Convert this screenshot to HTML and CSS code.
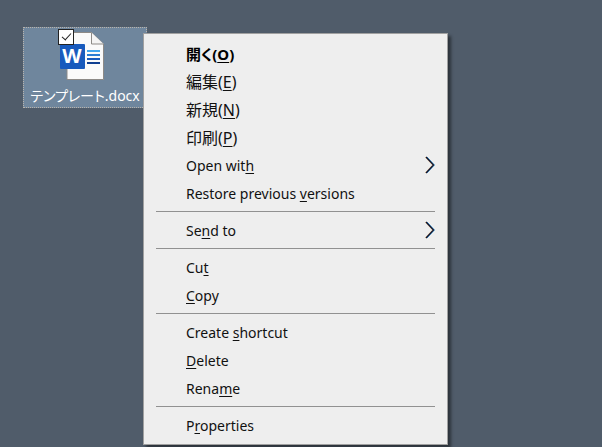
FILE: index.html
```html
<!DOCTYPE html>
<html lang="ja">

<head>
    <meta charset="UTF-8">
    <title>デスクトップ</title>
    <link rel="stylesheet" href="styles.css">
</head>

<body>
    <div class="file">
        <div class="thumb">
            <input type="checkbox" class="check" id="doc" checked>
            <svg width="46" height="50" viewBox="0 0 46 50" aria-hidden="true">
                <path d="M7 .5H31.500L43.500 12V47.500H7Z" fill="#fafafa" stroke="#8d8a87" />
                <path d="M31.500 .5V12H43.500" fill="#f4f4f4" stroke="#8d8a87" />
                <rect x="27" y="18" width="13" height="2" fill="#41a5ee" />
                <rect x="27" y="22" width="13" height="2" fill="#2b7cd3" />
                <rect x="27" y="26" width="13" height="2" fill="#185abd" />
                <rect x="27" y="30" width="13" height="2" fill="#103f91" />
                <rect x="0" y="12" width="25" height="25" rx="1" fill="#185abd" />
                <text x="12" y="31" class="word">W</text>
            </svg>
        </div>
        <label for="doc">テンプレート.docx</label>
    </div>

    <div class="menu">
        <button type="button" class="item ja default"><span>開く(<u>O</u>)</span></button>
        <button type="button" class="item ja"><span>編集(<u>E</u>)</span></button>
        <button type="button" class="item ja"><span>新規(<u>N</u>)</span></button>
        <button type="button" class="item ja"><span>印刷(<u>P</u>)</span></button>
        <button type="button" class="item">
            <span>Open wit<u>h</u></span>
            <svg class="arrow" width="10" height="18" viewBox="0 0 10 18" aria-hidden="true">
                <path d="M1 1L8.500 9L1 17" stroke="#f3cf9a" transform="translate(-1 0)" />
                <path d="M1 1L8.500 9L1 17" stroke="#3aa0dc" transform="translate(1 0)" />
                <path d="M1 1L8.500 9L1 17" stroke="#10102a" stroke-width="1.300" />
            </svg>
        </button>
        <button type="button" class="item"><span>Restore previous <u>v</u>ersions</span></button>
        <hr>
        <button type="button" class="item">
            <span>Se<u>n</u>d to</span>
            <svg class="arrow" width="10" height="18" viewBox="0 0 10 18" aria-hidden="true">
                <path d="M1 1L8.500 9L1 17" stroke="#f3cf9a" transform="translate(-1 0)" />
                <path d="M1 1L8.500 9L1 17" stroke="#3aa0dc" transform="translate(1 0)" />
                <path d="M1 1L8.500 9L1 17" stroke="#10102a" stroke-width="1.300" />
            </svg>
        </button>
        <hr>
        <button type="button" class="item"><span>Cu<u>t</u></span></button>
        <button type="button" class="item"><span><u>C</u>opy</span></button>
        <hr>
        <button type="button" class="item"><span>Create <u>s</u>hortcut</span></button>
        <button type="button" class="item"><span><u>D</u>elete</span></button>
        <button type="button" class="item"><span>Rena<u>m</u>e</span></button>
        <hr>
        <button type="button" class="item"><span>P<u>r</u>operties</span></button>
    </div>
</body>

</html>
```
FILE: styles.css
```css
html,
body {
    height: 100%;
}

body {
    margin: 0;
    background: #505c6a;
    font-family: "Noto Sans", "Noto Sans CJK JP", sans-serif;
    overflow: hidden;
}

/* 選択中のファイル */
.file {
    position: absolute;
    left: 23px;
    top: 27px;
    box-sizing: border-box;
    width: 124px;
    padding-top: 4px;
    border: 1px dotted #b9b3ab;
    background: #6f869d;
    text-align: center;
}

.thumb {
    position: relative;
    width: 46px;
    height: 50px;
    margin: 0 auto 0 36px;
}

.thumb svg {
    display: block;
}

.word {
    fill: #fff;
    font: bold 20px "Open Sans", sans-serif;
    text-anchor: middle;
}

.check {
    position: absolute;
    left: -2px;
    top: -3px;
    width: 16px;
    height: 16px;
    margin: 0;
    border: 1px solid #222;
    background: #fff;
    appearance: none;
}

.check:checked::after {
    content: "";
    position: absolute;
    left: 5px;
    top: 1px;
    width: 4px;
    height: 8px;
    border: solid #222;
    border-width: 0 1px 1px 0;
    transform: rotate(42deg);
}

.file label {
    display: block;
    padding-top: 3px;
    color: #fff;
    font-size: 14px;
    font-feature-settings: "palt";
    line-height: 22px;
    white-space: nowrap;
}

/* 右クリックメニュー */
.menu {
    position: absolute;
    left: 143px;
    top: 33px;
    box-sizing: border-box;
    width: 305px;
    padding: 6px 12px 4px;
    border: 1px solid #a0a0a0;
    background: #eee;
    box-shadow: 3px 3px 3px rgba(0, 0, 0, 0.45);
}

.item {
    display: flex;
    align-items: center;
    width: 100%;
    height: 28px;
    padding: 0 0 2px 30px;
    border: none;
    background: none;
    color: #111;
    font: inherit;
    font-size: 14px;
    text-align: left;
    white-space: nowrap;
}

.item u {
    text-underline-offset: 2px;
    text-decoration-skip-ink: none;
}

.ja {
    font-size: 16px;
    font-feature-settings: "palt";
}

.default {
    color: #000;
    font-size: 15px;
    font-weight: bold;
}

.arrow {
    margin-left: auto;
    fill: none;
}

.menu hr {
    height: 1px;
    margin: 3px 0 5px;
    border: none;
    background: #919191;
}
```
